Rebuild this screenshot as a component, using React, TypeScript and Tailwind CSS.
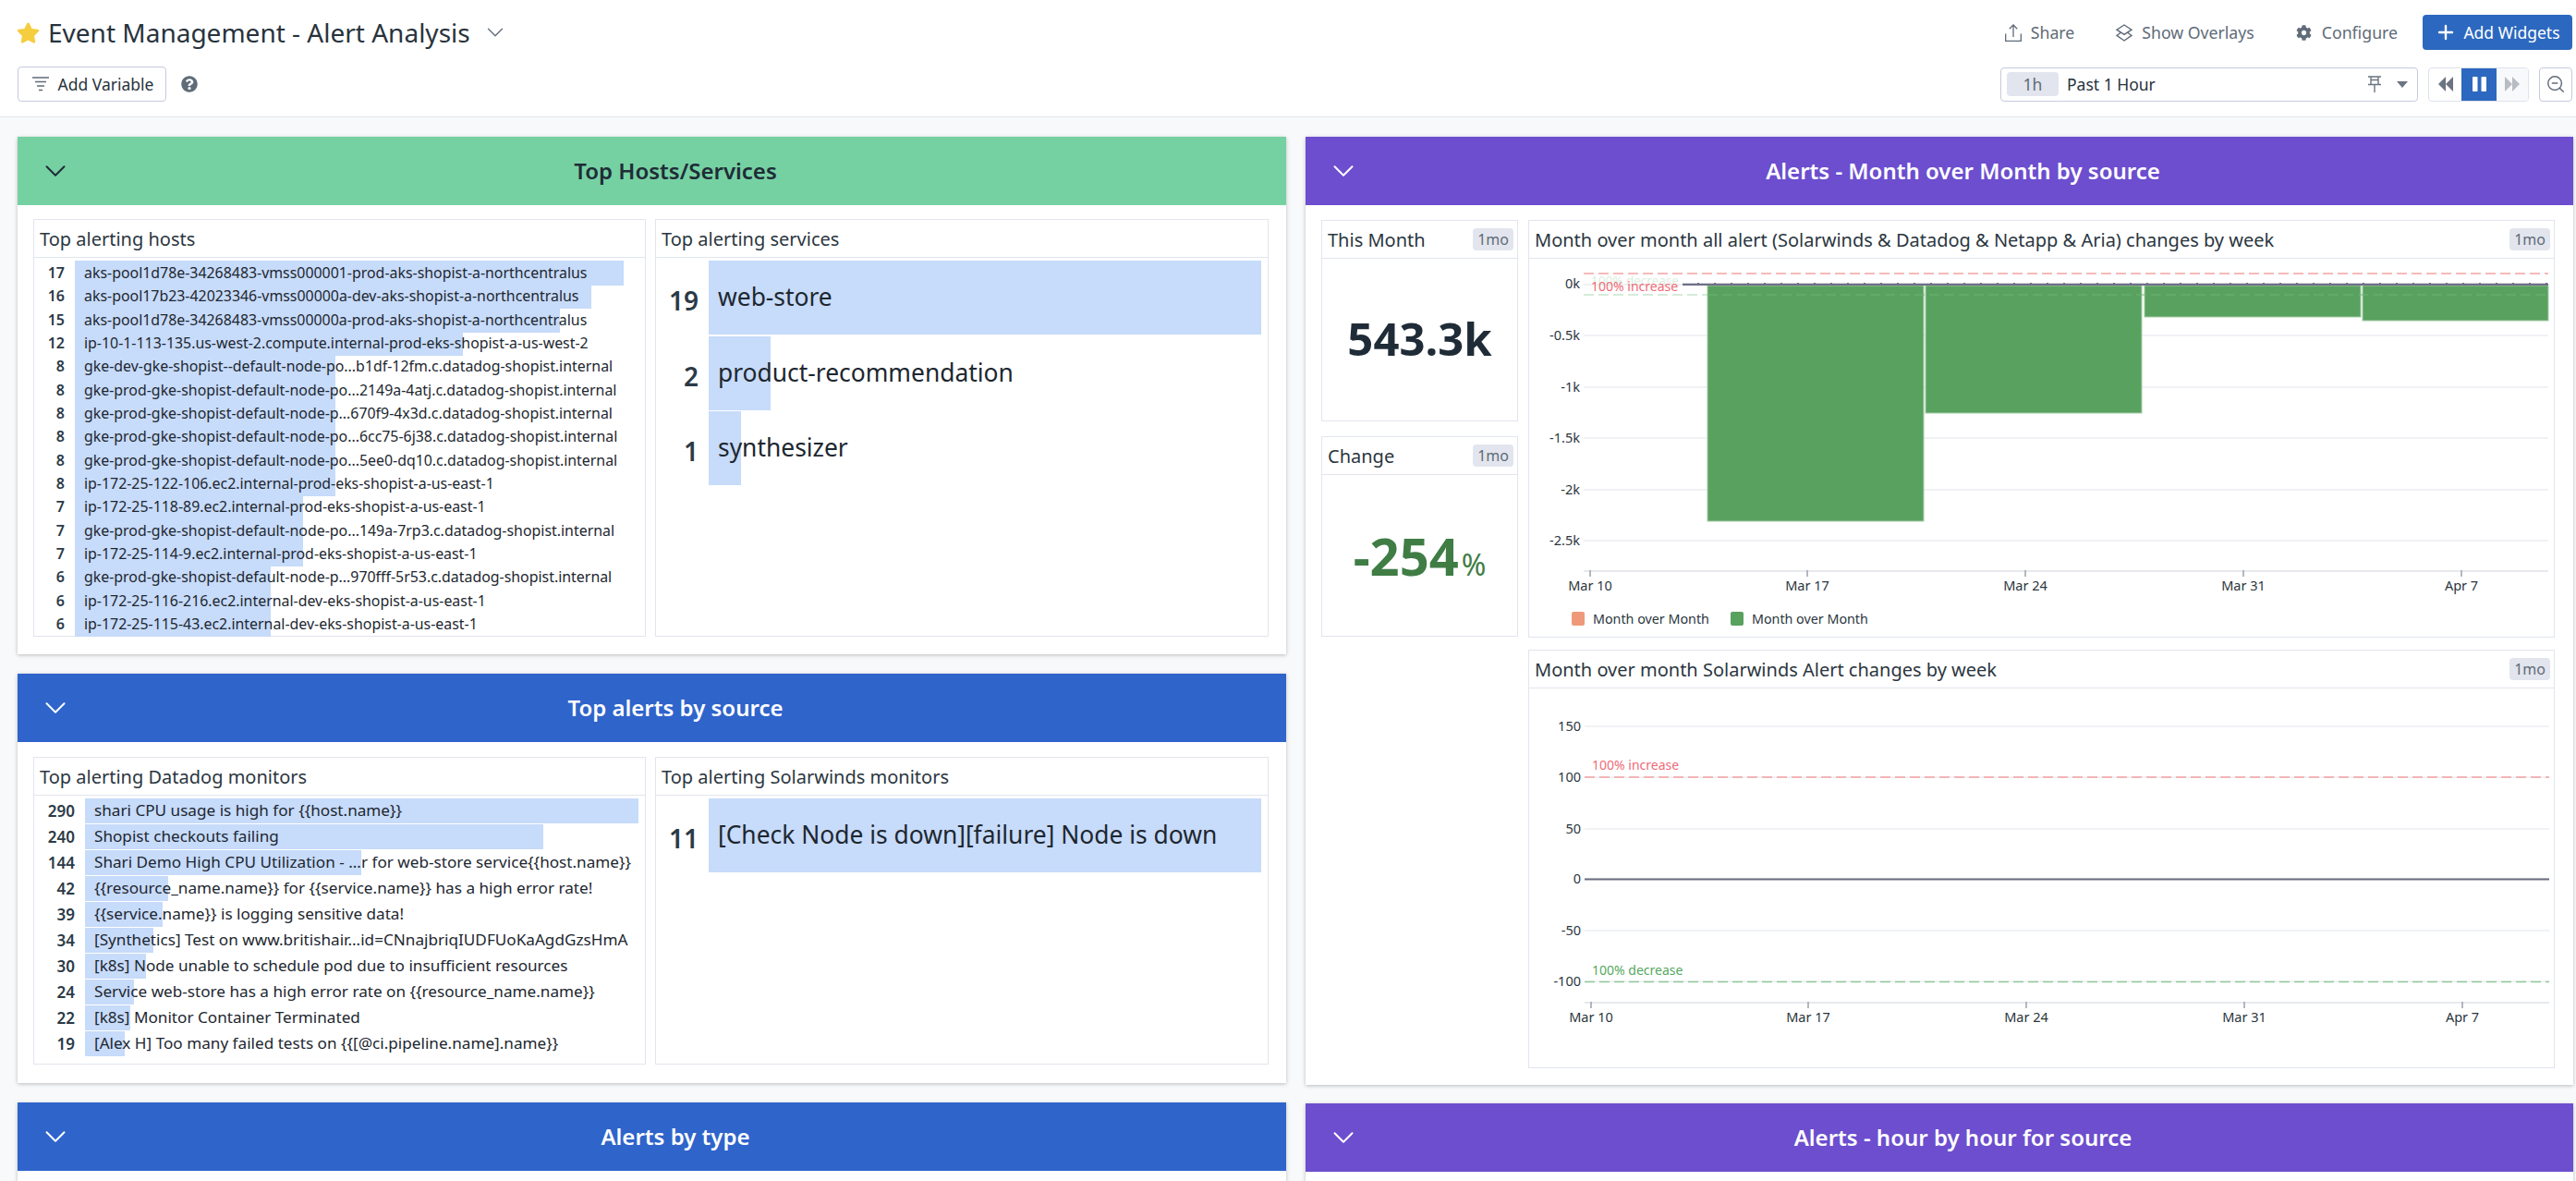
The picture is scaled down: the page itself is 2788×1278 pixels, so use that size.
import { ChevronDown, Plus, ZoomOut } from "lucide-react";
import { FaStar, FaCog, FaQuestionCircle } from "react-icons/fa";

type Row = { n: number; label: string };

const hosts: Row[] = [
  { n: 17, label: "aks-pool1d78e-34268483-vmss000001-prod-aks-shopist-a-northcentralus" },
  { n: 16, label: "aks-pool17b23-42023346-vmss00000a-dev-aks-shopist-a-northcentralus" },
  { n: 15, label: "aks-pool1d78e-34268483-vmss00000a-prod-aks-shopist-a-northcentralus" },
  { n: 12, label: "ip-10-1-113-135.us-west-2.compute.internal-prod-eks-shopist-a-us-west-2" },
  { n: 8, label: "gke-dev-gke-shopist--default-node-po...b1df-12fm.c.datadog-shopist.internal" },
  { n: 8, label: "gke-prod-gke-shopist-default-node-po...2149a-4atj.c.datadog-shopist.internal" },
  { n: 8, label: "gke-prod-gke-shopist-default-node-p...670f9-4x3d.c.datadog-shopist.internal" },
  { n: 8, label: "gke-prod-gke-shopist-default-node-po...6cc75-6j38.c.datadog-shopist.internal" },
  { n: 8, label: "gke-prod-gke-shopist-default-node-po...5ee0-dq10.c.datadog-shopist.internal" },
  { n: 8, label: "ip-172-25-122-106.ec2.internal-prod-eks-shopist-a-us-east-1" },
  { n: 7, label: "ip-172-25-118-89.ec2.internal-prod-eks-shopist-a-us-east-1" },
  { n: 7, label: "gke-prod-gke-shopist-default-node-po...149a-7rp3.c.datadog-shopist.internal" },
  { n: 7, label: "ip-172-25-114-9.ec2.internal-prod-eks-shopist-a-us-east-1" },
  { n: 6, label: "gke-prod-gke-shopist-default-node-p...970fff-5r53.c.datadog-shopist.internal" },
  { n: 6, label: "ip-172-25-116-216.ec2.internal-dev-eks-shopist-a-us-east-1" },
  { n: 6, label: "ip-172-25-115-43.ec2.internal-dev-eks-shopist-a-us-east-1" },
];

const services: Row[] = [
  { n: 19, label: "web-store" },
  { n: 2, label: "product-recommendation" },
  { n: 1, label: "synthesizer" },
];

const monitors: Row[] = [
  { n: 290, label: "shari CPU usage is high for {{host.name}}" },
  { n: 240, label: "Shopist checkouts failing" },
  { n: 144, label: "Shari Demo High CPU Utilization - ...r for web-store service{{host.name}}" },
  { n: 42, label: "{{resource_name.name}} for {{service.name}} has a high error rate!" },
  { n: 39, label: "{{service.name}} is logging sensitive data!" },
  { n: 34, label: "[Synthetics] Test on www.britishair...id=CNnajbriqIUDFUoKaAgdGzsHmA" },
  { n: 30, label: "[k8s] Node unable to schedule pod due to insufficient resources" },
  { n: 24, label: "Service web-store has a high error rate on {{resource_name.name}}" },
  { n: 22, label: "[k8s] Monitor Container Terminated" },
  { n: 19, label: "[Alex H] Too many failed tests on {{[@ci.pipeline.name].name}}" },
];

const ticks = [
  { x: 1721, label: "Mar 10" },
  { x: 1956, label: "Mar 17" },
  { x: 2192, label: "Mar 24" },
  { x: 2428, label: "Mar 31" },
  { x: 2664, label: "Apr 7" },
];

function Badge() {
  return <span className="rounded-[4px] bg-[#e2e5ed] px-[5px] text-[16px] leading-[24px] text-[#5f6b78]">1mo</span>;
}

function Widget({ title, badge, className, children }: { title: string; badge?: boolean; className: string; children: React.ReactNode }) {
  return (
    <div className={`flex flex-col border border-[#e2e5ee] bg-white ${className}`}>
      <div className="flex h-[41px] shrink-0 items-center justify-between border-b border-[#e2e5ee] pl-[6px] pr-[4px]">
        <span className="pt-[1px] text-[20px] text-[#2b3640]">{title}</span>
        {badge && <Badge />}
      </div>
      {children}
    </div>
  );
}

function SectionHead({ title, color, dark }: { title: string; color: string; dark?: boolean }) {
  return (
    <div className={`flex h-[74px] shrink-0 items-center ${color} ${dark ? "text-[#1f2c37]" : "text-white"}`}>
      <ChevronDown size={38} strokeWidth={1.25} className="ml-[22px]" />
      <span className="flex-1 pr-[9px] text-center text-[24px] font-semibold">{title}</span>
    </div>
  );
}

function TopList({ rows, max, full, rowH, numW, numClass, labelClass }: { rows: Row[]; max: number; full: number; rowH: string; numW: string; numClass: string; labelClass: string }) {
  return (
    <div className={`flex flex-col pt-[3px] ${rowH === "h-[80px]" ? "gap-[1.5px]" : "gap-px"}`}>
      {rows.map((r, i) => (
        <div key={i} className={`flex ${rowH}`}>
          <div className={`${numW} shrink-0 pr-[11px] text-right font-semibold text-[#2b3a47] ${numClass}`}>{r.n}</div>
          <div className="grid flex-1">
            <div className="col-start-1 row-start-1 bg-[#c7dbfa]" style={{ width: 4 + (r.n / max) * (full - 4) }} />
            <div className={`col-start-1 row-start-1 whitespace-nowrap pl-[10px] text-[#1d2730] ${labelClass}`}>{r.label}</div>
          </div>
        </div>
      ))}
    </div>
  );
}

function Grid({ y, x1 = 1714, x2 = 2758, c = "#eceef2" }: { y: number; x1?: number; x2?: number; c?: string }) {
  return <line x1={x1} x2={x2} y1={y} y2={y} stroke={c} strokeWidth={1.5} />;
}

function Axis({ y }: { y: number }) {
  return (
    <g>
      <line x1={1714} x2={2758} y1={y} y2={y} stroke="#e0e2e8" strokeWidth={1.5} />
      {ticks.map((t) => (
        <g key={t.x}>
          <line x1={t.x} x2={t.x} y1={y - 1} y2={y + 6} stroke="#9aa0ab" strokeWidth={1.5} />
          <text x={t.x} y={y + 21} textAnchor="middle" fontSize={14.5} fill="#2b3640">{t.label}</text>
        </g>
      ))}
    </g>
  );
}

function AllAlertsChart() {
  const ylabels: [number, string][] = [[307, "0k"], [363, "-0.5k"], [419, "-1k"], [474, "-1.5k"], [530, "-2k"], [585, "-2.5k"]];
  const bars = [
    [1848, 2082, 564],
    [2084, 2318, 447],
    [2321, 2555, 343],
    [2557, 2758, 347],
  ];
  return (
    <svg viewBox="1655 280 1109 409" className="h-[409px] w-[1109px]">
      {ylabels.map(([y, l]) => (
        <g key={l}>
          <Grid y={y === 307 ? 308 : y} />
          <text x={1710} y={y + 5} textAnchor="end" fontSize={14.5} fill="#2b3640">{l}</text>
        </g>
      ))}
      {bars.map(([a, b, y]) => (
        <rect key={a} x={a} y={309} width={b - a} height={y - 309} fill="#59a15f" stroke="#a6ceaa" strokeWidth={1} />
      ))}
      <line x1={1714} x2={2758} y1={296} y2={296} stroke="#f4a3a3" strokeWidth={1.5} strokeDasharray="11 5" />
      <line x1={1714} x2={1848} y1={319} y2={319} stroke="#8fca98" strokeOpacity={0.5} strokeWidth={1.5} strokeDasharray="11 5" />
      <line x1={1848} x2={2758} y1={319} y2={319} stroke="#6cb676" strokeOpacity={0.6} strokeWidth={1.5} strokeDasharray="11 5" />
      <line x1={1821} x2={2758} y1={307.5} y2={307.5} stroke="#6f6f88" strokeWidth={3} />
      <line x1={1821} x2={2758} y1={306.5} y2={306.5} stroke="#ffffff" strokeWidth={1} strokeDasharray="16 2" strokeOpacity={0.7} />
      <text x={1722} y={309} fontSize={13.5} fill="#dcefdf">100% decrease</text>
      <text x={1722} y={315} fontSize={14} fill="#ef6b78">100% increase</text>
      <Axis y={618} />
    </svg>
  );
}

function SolarwindsChart() {
  const ylabels: [number, string][] = [[785, "150"], [840, "100"], [896, "50"], [950, "0"], [1006, "-50"], [1061, "-100"]];
  return (
    <svg viewBox="1654 744 1110 410" className="h-[410px] w-[1110px]">
      {ylabels.map(([y, l]) => (
        <g key={l}>
          <Grid y={y} />
          <text x={1710} y={y + 5} textAnchor="end" fontSize={14.5} fill="#2b3640">{l}</text>
        </g>
      ))}
      <line x1={1714} x2={2758} y1={840} y2={840} stroke="#f4a3a3" strokeWidth={1.5} strokeDasharray="11 5" />
      <line x1={1714} x2={2758} y1={1061.5} y2={1061.5} stroke="#8fca98" strokeWidth={1.5} strokeDasharray="11 5" />
      <line x1={1714} x2={2758} y1={950.5} y2={950.5} stroke="#6b6b7f" strokeWidth={2} />
      <text x={1722} y={832} fontSize={14} fill="#ef6b78">100% increase</text>
      <text x={1722} y={1054} fontSize={14} fill="#56a85f">100% decrease</text>
      <Axis y={1084} />
    </svg>
  );
}

function TopHeader() {
  return (
    <header className="flex h-[127px] shrink-0 flex-col border-b border-[#e2e5ee] bg-white pl-[18px] pr-[4px]">
      <div className="flex h-[72px] items-center justify-between pb-[2px]">
        <div className="flex items-center text-[#28333d]">
          <FaStar size={25} className="mr-[9px] text-[#f5cd3e]" />
          <span className="text-[28px]">Event Management - Alert Analysis</span>
          <ChevronDown size={30} strokeWidth={1} className="ml-[12px] text-[#5f6b78]" />
        </div>
        <div className="flex items-center text-[17.7px] text-[#5f6b78]">
          <svg viewBox="0 0 18 19" className="mr-[10px] h-[19px] w-[18px]" fill="none" stroke="currentColor" strokeWidth={1.3}>
            <path d="M.7 10.5v7.8h16.6v-7.8M9 14V1M4.8 5.2 9 1l4.2 4.2" />
          </svg>
          <span className="mr-[44px]">Share</span>
          <svg viewBox="0 0 20 19" className="mr-[9px] h-[19px] w-[20px]" fill="none" stroke="currentColor" strokeWidth={1.4}>
            <path d="M10 1 18 6.2 10 11.4 2 6.2ZM6 9.5 2 12.4l8 5.6 8-5.6-4-2.9" />
          </svg>
          <span className="mr-[45px]">Show Overlays</span>
          <FaCog size={17} className="mr-[11px]" />
          <span className="mr-[27px]">Configure</span>
          <button className="flex h-[38px] w-[162px] items-center justify-center rounded-[4px] bg-[#2c68bf] text-[17.5px] text-white">
            <Plus size={24} strokeWidth={2.4} className="mr-[7px]" />
            Add Widgets
          </button>
        </div>
      </div>
      <div className="flex items-center justify-between">
        <div className="ml-[1px] flex items-center">
          <button className="flex h-[38px] w-[161px] items-center justify-center rounded-[4px] border border-[#c5cade] pl-[2px] text-[17.5px] text-[#28333d]">
            <svg viewBox="0 0 18 16" className="mr-[10px] h-[16px] w-[18px]" fill="none" stroke="#5f6b78" strokeWidth={1.6}>
              <path d="M0 1h18M3 5.5h12M5 10h8M7 14.5h4" />
            </svg>
            Add Variable
          </button>
          <FaQuestionCircle size={18} className="ml-[16px] text-[#5f6b78]" />
        </div>
        <div className="flex items-center">
          <div className="flex h-[37px] w-[452px] items-center rounded-[4px] border border-[#c5cade] pl-[6px] pr-[10px] text-[17.5px] text-[#28333d]">
            <span className="flex h-[26px] w-[56px] items-center justify-center rounded-[4px] bg-[#e2e5ed] text-[#5f6b78]">1h</span>
            <span className="ml-[9px] flex-1">Past 1 Hour</span>
            <svg viewBox="0 0 14 18" className="mr-[17px] h-[18px] w-[14px]" fill="none" stroke="#6b7480" strokeWidth={1.4}>
              <path d="M0 1h14M3 1v8M11 1v8M0 9.5h14M7 9.5V18M3 4.5h8" />
            </svg>
            <svg viewBox="0 0 12 7" className="h-[7px] w-[12px]" fill="#6b7480"><path d="M0 0h12L6 7z" /></svg>
          </div>
          <div className="ml-[11px] flex h-[37px] w-[109px] overflow-hidden rounded-[4px] border border-[#dfe2ec]">
            <div className="flex w-[35px] items-center justify-center">
              <svg viewBox="0 0 16 16" className="h-[16px] w-[16px]" fill="#6b7480"><path d="M8 0v16L0 8zM16 0v16L8 8z" /></svg>
            </div>
            <div className="flex w-[38px] items-center justify-center bg-[#2c68bf]">
              <svg viewBox="0 0 15 16" className="h-[16px] w-[15px]" fill="#ffffff"><rect width="5.5" height="16" rx="1" /><rect x="9.5" width="5.5" height="16" rx="1" /></svg>
            </div>
            <div className="flex flex-1 items-center justify-center bg-[#f8f9fb]">
              <svg viewBox="0 0 16 16" className="h-[16px] w-[16px]" fill="#b8bcc4"><path d="M0 0v16l8-8zM8 0v16l8-8z" /></svg>
            </div>
          </div>
          <div className="ml-[11px] flex h-[37px] w-[36px] items-center justify-center rounded-[4px] border border-[#c5cade] text-[#5f6b78]">
            <ZoomOut size={22} strokeWidth={1.6} />
          </div>
        </div>
      </div>
    </header>
  );
}

export default function App() {
  return (
    <div className="flex h-[1278px] w-[2788px] flex-col overflow-hidden bg-[#f8f9fb] font-['Noto_Sans',sans-serif]">
      <TopHeader />
      <main className="grid grid-cols-[1373px_1372px] gap-x-[21px] pl-[19px] pt-[21px]">
        <div className="flex flex-col gap-[21px]">
          <section className="bg-white shadow-[0_1px_4px_rgba(0,0,0,0.25)]">
            <SectionHead title="Top Hosts/Services" color="bg-[#76d1a2]" dark />
            <div className="flex gap-[10px] pb-[19px] pl-[17px] pr-[19px] pt-[15px]">
              <Widget title="Top alerting hosts" className="h-[452px] w-[663px]">
                <TopList rows={hosts} max={17} full={594} rowH="h-[24.33px]" numW="w-[44px]" numClass="text-[16px] leading-[27px]" labelClass="text-[15.9px] leading-[27px]" />
              </Widget>
              <Widget title="Top alerting services" className="h-[452px] w-[664px]">
                <TopList rows={services} max={19} full={598} rowH="h-[80px]" numW="w-[57px]" numClass="text-[28px] leading-[86px]" labelClass="text-[26.4px] leading-[79px]" />
              </Widget>
            </div>
          </section>
          <section className="bg-white shadow-[0_1px_4px_rgba(0,0,0,0.25)]">
            <SectionHead title="Top alerts by source" color="bg-[#2f64cb]" />
            <div className="flex gap-[10px] pb-[20px] pl-[17px] pr-[19px] pt-[16px]">
              <Widget title="Top alerting Datadog monitors" className="h-[333px] w-[663px]">
                <TopList rows={monitors} max={290} full={599} rowH="h-[27px]" numW="w-[55px]" numClass="text-[17px] leading-[28px]" labelClass="text-[17.15px] leading-[26px]" />
              </Widget>
              <Widget title="Top alerting Solarwinds monitors" className="h-[333px] w-[664px]">
                <TopList rows={[{ n: 11, label: "[Check Node is down][failure] Node is down" }]} max={11} full={598} rowH="h-[80px]" numW="w-[57px]" numClass="text-[28px] leading-[86px]" labelClass="text-[26.4px] leading-[79px]" />
              </Widget>
            </div>
          </section>
          <section className="bg-white shadow-[0_1px_4px_rgba(0,0,0,0.25)]">
            <SectionHead title="Alerts by type" color="bg-[#2f64cb]" />
            <div className="h-[20px]" />
          </section>
        </div>
        <div className="flex flex-col gap-[20px]">
          <section className="bg-white shadow-[0_1px_4px_rgba(0,0,0,0.25)]">
            <SectionHead title="Alerts - Month over Month by source" color="bg-[#6c4ecf]" />
            <div className="flex gap-[11px] pb-[18px] pl-[17px] pt-[16px]">
              <div className="flex w-[213px] shrink-0 flex-col gap-[16px]">
                <Widget title="This Month" badge className="h-[218px]">
                  <div className="flex flex-1 items-center justify-center pb-[2px] text-[49px] font-bold text-[#1f2c37]">543.3k</div>
                </Widget>
                <Widget title="Change" badge className="h-[217px]">
                  <div className="flex flex-1 items-baseline justify-center pt-[45px] font-bold text-[#3f7d45]">
                    <span className="text-[56px] leading-[84px]">-254</span>
                    <span className="ml-[3px] text-[32px] font-normal">%</span>
                  </div>
                </Widget>
              </div>
              <div className="flex w-[1111px] flex-col gap-[13px]">
                <Widget title="Month over month all alert (Solarwinds & Datadog & Netapp & Aria) changes by week" badge className="relative h-[452px]">
                  <AllAlertsChart />
                  <div className="absolute left-[46px] top-[420px] flex items-center text-[14.3px] text-[#2b3640]">
                    <span className="mr-[9px] h-[15px] w-[14px] rounded-[2px] bg-[#ee9a7a]" />
                    <span className="mr-[23px]">Month over Month</span>
                    <span className="mr-[9px] h-[15px] w-[14px] rounded-[2px] bg-[#59a15f]" />
                    <span>Month over Month</span>
                  </div>
                </Widget>
                <Widget title="Month over month Solarwinds Alert changes by week" badge className="h-[453px]">
                  <SolarwindsChart />
                </Widget>
              </div>
            </div>
          </section>
          <section className="bg-white shadow-[0_1px_4px_rgba(0,0,0,0.25)]">
            <SectionHead title="Alerts - hour by hour for source" color="bg-[#6c4ecf]" />
            <div className="h-[20px]" />
          </section>
        </div>
      </main>
    </div>
  );
}
